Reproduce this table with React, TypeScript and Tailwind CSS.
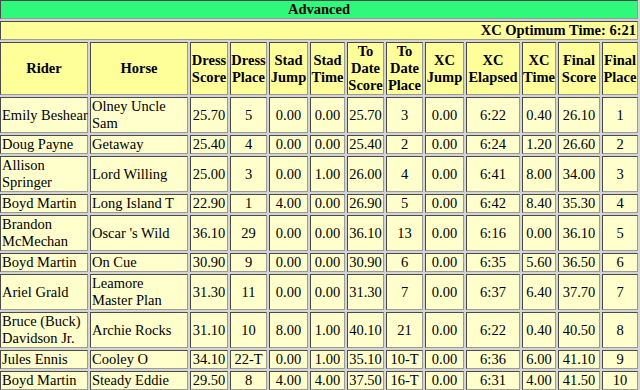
import React from 'react';

// results for the Advanced division
const rows = [
  ['Emily Beshear', 'Olney Uncle\nSam', '25.70', '5', '0.00', '0.00', '25.70', '3', '0.00', '6:22', '0.40', '26.10', '1'],
  ['Doug Payne', 'Getaway', '25.40', '4', '0.00', '0.00', '25.40', '2', '0.00', '6:24', '1.20', '26.60', '2'],
  ['Allison\nSpringer', 'Lord Willing', '25.00', '3', '0.00', '1.00', '26.00', '4', '0.00', '6:41', '8.00', '34.00', '3'],
  ['Boyd Martin', 'Long Island T', '22.90', '1', '4.00', '0.00', '26.90', '5', '0.00', '6:42', '8.40', '35.30', '4'],
  ['Brandon\nMcMechan', "Oscar 's Wild", '36.10', '29', '0.00', '0.00', '36.10', '13', '0.00', '6:16', '0.00', '36.10', '5'],
  ['Boyd Martin', 'On Cue', '30.90', '9', '0.00', '0.00', '30.90', '6', '0.00', '6:35', '5.60', '36.50', '6'],
  ['Ariel Grald', 'Leamore\nMaster Plan', '31.30', '11', '0.00', '0.00', '31.30', '7', '0.00', '6:37', '6.40', '37.70', '7'],
  ['Bruce (Buck)\nDavidson Jr.', 'Archie Rocks', '31.10', '10', '8.00', '1.00', '40.10', '21', '0.00', '6:22', '0.40', '40.50', '8'],
  ['Jules Ennis', 'Cooley O', '34.10', '22-T', '0.00', '1.00', '35.10', '10-T', '0.00', '6:36', '6.00', '41.10', '9'],
  ['Boyd Martin', 'Steady Eddie', '29.50', '8', '4.00', '4.00', '37.50', '16-T', '0.00', '6:31', '4.00', '41.50', '10'],
];

const headers = [
  'Rider', 'Horse', 'Dress\nScore', 'Dress\nPlace', 'Stad\nJump', 'Stad\nTime', 'To\nDate\nScore',
  'To\nDate\nPlace', 'XC\nJump', 'XC\nElapsed', 'XC\nTime', 'Final\nScore', 'Final\nPlace',
];

const cell =
  'border border-t-[#4a4a4a] border-l-[#4a4a4a] border-r-[#9a9a9a] border-b-[#9a9a9a] py-0 align-middle whitespace-pre';

export default function App() {
  return (
    <div className="w-[640px] h-[390px] overflow-hidden bg-[#d4d4d4] font-['Liberation_Serif',serif] text-[14.5px] leading-[17px] text-black">
      <table className="table-fixed w-[642px] -ml-[2px] -mt-[2px] border-separate border-spacing-[2px]">
        <colgroup>
          <col className="w-[88px]" />
          <col className="w-[98px]" />
          <col className="w-[38px]" />
          <col className="w-[37px]" />
          <col className="w-[39px]" />
          <col className="w-[35px]" />
          <col className="w-[37px]" />
          <col className="w-[37px]" />
          <col className="w-[39px]" />
          <col className="w-[54px]" />
          <col className="w-[34px]" />
          <col className="w-[42px]" />
          <col className="w-[36px]" />
        </colgroup>
        <thead>
          <tr>
            <th colSpan={13} className={`${cell} px-px bg-[#2ef97a] text-center font-bold`}>
              Advanced
            </th>
          </tr>
          <tr>
            <th colSpan={13} className={`${cell} px-px bg-[#ffff99] text-right font-bold`}>
              XC Optimum Time: 6:21
            </th>
          </tr>
          <tr>
            {headers.map((h) => (
              <th key={h} className={`${cell} px-0 bg-[#ffff99] text-center font-bold`}>
                {h}
              </th>
            ))}
          </tr>
        </thead>
        <tbody>
          {rows.map((r, i) => (
            <tr key={i}>
              {r.map((v, j) => (
                <td
                  key={j}
                  className={`${cell} bg-[#ffffcc] ${j < 2 ? 'text-left px-[1px]' : 'text-center px-0'}`}
                >
                  {v}
                </td>
              ))}
            </tr>
          ))}
        </tbody>
      </table>
    </div>
  );
}
